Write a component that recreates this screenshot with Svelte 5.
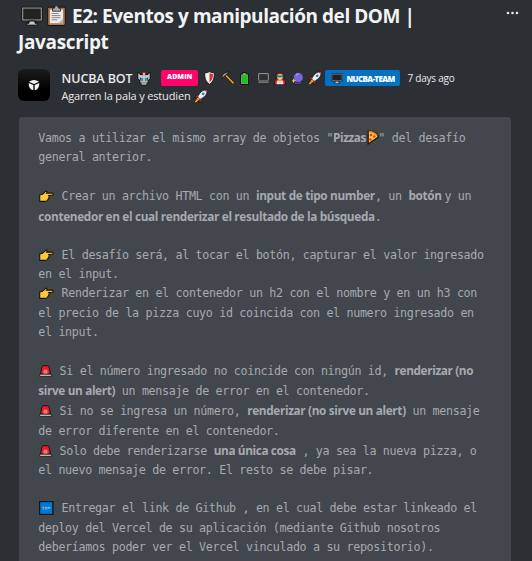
<script>
  const PITCH = 6.7;

  // Spreads the letters of a run so that it takes exactly the given width.
  function fit(node, width) {
    const natural = node.getBoundingClientRect().width;
    node.style.letterSpacing = (width - natural) / [...node.textContent].length + 'px';
  }

  const m = (t) => ({ t, w: t.length * PITCH });
  const b = (t, w) => ({ t, w, bold: true });
  const i = (icon, w) => ({ icon, w });

  const lines = [
    { top: 0, runs: [m('Vamos a utilizar el mismo array de objetos "'), b('Pizzas', 32.7), i('pizza', 12.5), m('" del desafío')] },
    { top: 1, runs: [m('general anterior.')] },
    { top: 21, runs: [i('point', 16.6), m(' Crear un archivo HTML con un '), b('input de tipo number', 119), m(', un '), b('botón ', 36), m('y un')] },
    { top: 3, runs: [b('contenedor en el cual renderizar el resultado de la búsqueda', 336.5), m('.')] },
    { top: 20, runs: [i('point', 16.6), m(' El desafío será, al tocar el botón, capturar el valor ingresado')] },
    { top: 1, runs: [m('en el input.')] },
    { top: 1, runs: [i('point', 16.6), m(' Renderizar en el contenedor un h2 con el nombre y en un h3 con')] },
    { top: 2, runs: [m('el precio de la pizza cuyo id coincida con el numero ingresado en')] },
    { top: 1, runs: [m('el input.')] },
    { top: 21, runs: [i('siren', 14.6), m(' Si el número ingresado no coincide con ningún id, '), b('renderizar (no', 78.5)] },
    { top: 2, runs: [b('sirve un alert)', 76.8), m(' un mensaje de error en el contenedor.')] },
    { top: 2, runs: [i('siren', 14.6), m(' Si no se ingresa un número, '), b('renderizar (no sirve un alert)', 158.6), m(' un mensaje')] },
    { top: 2, runs: [m('de error diferente en el contenedor.')] },
    { top: 2, runs: [i('siren', 14.6), m(' Solo debe renderizarse '), b('una única cosa', 82), m(' , ya sea la nueva pizza, o')] },
    { top: 1, runs: [m('el nuevo mensaje de error. El resto se debe pisar.')] },
    { top: 20, runs: [i('soon', 16.6), m(' Entregar el link de Github , en el cual debe estar linkeado el')] },
    { top: 2, runs: [m('deploy del Vercel de su aplicación (mediante Github nosotros')] },
    { top: 1, runs: [m('deberíamos poder ver el Vercel vinculado a su repositorio).')] }
  ];
</script>

{#snippet monitor(w, h)}
  <svg width={w} height={h} viewBox="0 0 22 20">
    <rect x=".5" y=".8" width="21" height="14.4" rx="1" fill="#090909" />
    <rect x="1.7" y="2" width="18.6" height="12" fill="#222" stroke="#a7a5a1" />
    <path d="M8 15h6v2.2h2.2v2H5.8v-2H8z" fill="#c9c9c9" stroke="#090909" />
  </svg>
{/snippet}

{#snippet rocket()}
  <svg width="14" height="14" viewBox="0 0 14 14">
    <path d="M4 5 1.2 7.4 1 9l3-.5M9 9.500l-2.500 3.800-1.600.2.600-3.200" fill="#dc252d" stroke="#151515" stroke-width=".8" />
    <path d="M13.200.7C8.800.5 5.700 3.300 3.600 8l2.300 2.400C10.500 8.400 13.500 5.400 13.200.7z" fill="#e9eef2" stroke="#171717" stroke-width=".8" />
    <path d="m10.200 1 2.700-.1.100 2.900z" fill="#df2935" />
    <circle cx="9.200" cy="4.800" r="1.400" fill="#2487bd" />
    <path d="m3.800 8.500 1.800 1.800-3.600 2.900L.8 13z" fill="#ffb720" />
    <path d="m3.500 9.800.8.800-2 1.500z" fill="#f05b28" />
  </svg>
{/snippet}

<div class="page">
  <header>
    <h1>
      <span class="row">
        <span class="screen">{@render monitor(22, 20)}</span>
        <svg class="clip" width="19" height="21" viewBox="0 0 19 21">
          <rect x=".7" y="2.200" width="17.600" height="18.300" rx="1.400" fill="#b3794b" stroke="#17120f" />
          <rect x="3" y="4.600" width="13" height="13.600" fill="#eceaea" />
          <path d="M11.500 18.200 16 13.800v4.400z" fill="#b3b0ae" />
          <path d="M5.500 3.200h2L8.300.8h2.400l.8 2.400h2v3h-8z" fill="#aaa" stroke="#222" stroke-width=".8" />
          <path d="M4.600 8.500h7M4.600 10.600h9M4.600 12.700h9M4.600 14.800h5.500" stroke="#8b8b8b" />
        </svg>
        <span use:fit={342.5}>E2: Eventos y manipulación del DOM |</span>
      </span>
      <span class="row"><span use:fit={90.5}>Javascript</span></span>
    </h1>
    <svg class="more" width="14" height="4" viewBox="0 0 14 4" fill="#e8e9ea">
      <circle cx="2" cy="2" r="1.300" /><circle cx="6.500" cy="2" r="1.300" /><circle cx="11" cy="2" r="1.300" />
    </svg>
  </header>

  <div class="author">
    <div class="avatar">
      <svg width="12" height="12" viewBox="0 0 12 12" fill="#f4f4f4">
        <path d="M1 2.800Q6-.6 11 2.800L6 5z" /><path d="M.7 3.900 5.300 6v5.200C2.300 10.400.5 8 .7 3.900z" /><path d="M11.300 3.900 6.700 6v5.200c3-.8 4.800-3.200 4.600-7.300z" />
      </svg>
    </div>
    <div class="who">
      <div class="row names">
        <span class="name"><span use:fit={71}>NUCBA BOT</span></span>
        <svg class="bot" width="14" height="15" viewBox="0 0 14 15">
          <path d="M.8.8 3 3.500h8L13.200.8v7.400l-1.800.8-.8 4-2 1.300H5.400l-2-1.300-.8-4-1.800-.8z" fill="#bfc7cc" stroke="#111" />
          <path d="M5.600 1.500h2.800v4H5.600z" fill="#e94c34" /><path d="M6.500 2h1v4h-1z" fill="#fff" />
          <path d="M2.800 6.500 6 7.500v2H3.500zM11.200 6.500 8 7.500v2h2.500z" fill="#172a38" />
          <circle cx="4.800" cy="8" r="1" fill="#20b8ed" /><circle cx="9.200" cy="8" r="1" fill="#20b8ed" />
          <path d="M4.500 11.300h5v1.600h-5z" fill="#e6e8e8" stroke="#444" stroke-width=".6" />
        </svg>
        <span class="badge admin"><span use:fit={25.5}>ADMIN</span></span>
        <svg class="shield" width="11" height="14" viewBox="0 0 11 14">
          <path d="M.7 1.800Q3.500 1.800 5.500.6q2 1.200 4.800 1.200c.2 5.700-1 9-4.800 11.500C1.700 10.800.5 7.500.7 1.800z" fill="#e8e8e8" stroke="#191919" />
          <path d="M5.500 2.200v9.200C3 9.500 2 7 2 3q2 0 3.500-.8z" fill="#f2f2f2" /><path d="M5.500 2.200v9.200C8 9.500 9 7 9 3q-2 0-3.500-.8z" fill="#dc2d32" />
        </svg>
        <svg class="pick" width="14" height="14" viewBox="0 0 14 14">
          <path d="m5 4.500 7.800 8" stroke="#1a1510" stroke-width="3" /><path d="m5 4.500 7.600 7.800" stroke="#e7a12c" stroke-width="1.700" />
          <path d="M.8 7.300C.8 3.800 3.500 1 8.500.9 6.800 2 5.800 3 4.700 3.900 3.100 5.200 2 6.200.8 7.300z" fill="#a9a9a4" stroke="#171717" stroke-width=".8" />
        </svg>
        <svg class="battery" width="9" height="13" viewBox="0 0 9 13">
          <path d="M2.700.5h3.600V2h2.200v10.500H.5V2h2.200z" fill="#8d9b8d" stroke="#111" /><path d="M1.500 3.200h6v8.300h-6z" fill="#16c60c" />
        </svg>
        <svg class="laptop" width="13" height="11" viewBox="0 0 13 11">
          <path d="M1.700.6h9.600v7H1.700z" fill="#303030" stroke="#a4a4a4" stroke-width=".9" /><path d="M1.300 8h10.400l.9 2.200H.4z" fill="#8c8c8c" stroke="#181818" stroke-width=".7" />
        </svg>
        <svg class="hero" width="14" height="13" viewBox="0 0 14 13">
          <path d="M1 12.500 2.400 7h9.200l1.400 5.500z" fill="#e32432" stroke="#191012" stroke-width=".8" />
          <path d="M3.200 1Q7-1 10.700 1.300L11 6H3z" fill="#7c321a" stroke="#171111" stroke-width=".6" />
          <circle cx="7" cy="4.900" r="3" fill="#ffbe6d" /><path d="M3.700 3.500h6.600v2l-2-.2L7 5l-1.400.5-1.900-.2z" fill="#137aa2" />
          <path d="m3.500 12.300.8-3.700h5.400l.8 3.700z" fill="#d9e7ed" /><path d="m5.300 9 1.700 2.500L8.700 9z" fill="#ffc83d" />
        </svg>
        <svg class="ball" width="12" height="13" viewBox="0 0 12 13">
          <path d="M2.500 9h7.300v3.400H2.500z" fill="#63479b" stroke="#191428" stroke-width=".7" /><circle cx="6.300" cy="5.500" r="5" fill="#7469d2" stroke="#29245b" stroke-width=".8" />
          <path d="M4 3.300q1.200-1.800 3-1.500" stroke="#aea5f5" stroke-width="1.200" fill="none" /><path d="m1.500 6.500.8 1.600 1.700.7-1.700.8-.8 1.600-.7-1.600-.8-.8.8-.7z" fill="#ffc42d" />
        </svg>
        <span class="rocket">{@render rocket()}</span>
        <span class="badge team">{@render monitor(12, 11)}<span use:fit={48}>NUCBA-TEAM</span></span>
        <span class="time"><span use:fit={47}>7 days ago</span></span>
      </div>
      <div class="row tagline"><span use:fit={129}>Agarren la pala y estudien</span>{@render rocket()}</div>
    </div>
  </div>

  <article>
    {#each lines as line}
      <div class="line" style="margin-top: {line.top}px">
        {#each line.runs as run}
          {#if run.icon}
            <span class="emoji" style="width: {run.w}px">
              {#if run.icon === 'point'}
                <svg width="15" height="12" viewBox="0 0 15 12">
                  <path d="M.7 5 3.500 4.300 6.500 1.400c1-.6 1.900.2 1.400 1.100l-.4.600h5.700c1.300 0 1.300 2.100 0 2.200l-3.300.2c.5.500.5 1.200 0 1.600.3.600.1 1.300-.5 1.600.1.700-.3 1.100-1 1.300-.2.900-.9 1.400-2 1.400H.7z" fill="#ffc83d" stroke="#17130c" stroke-width="1.100" />
                </svg>
              {:else if run.icon === 'siren'}
                <svg width="13" height="12" viewBox="0 0 13 12">
                  <path d="M1.500 9.300 2.800 2.200Q3.200.7 4.600.6h3.800q1.400.1 1.800 1.600l1.300 7.100z" fill="#e51b2b" stroke="#141414" />
                  <path d="M4.500 9V6.800L3.600 6l1.300-.2L5.200 4l1.300 1L7.800 4l.3 1.800 1.300.2-.9.800V9z" fill="#ff7563" />
                  <path d="M.6 9.200h11.800v2.200H.6z" fill="#c9ccd0" stroke="#141414" stroke-width=".8" />
                </svg>
              {:else if run.icon === 'soon'}
                <svg width="15" height="14" viewBox="0 0 15 14">
                  <rect x=".6" y=".6" width="13.300" height="12.800" fill="#0078d7" stroke="#111" stroke-width="1.200" />
                  <path d="M3.300 6.300h2M3.600 8h1.700M6 6.500h2M6.200 7.900h2M9 7.800V6l.9.900.9-.9v1.800" fill="none" stroke="#9dd2f5" stroke-width=".8" />
                </svg>
              {:else}
                <svg class="slice" width="12" height="15" viewBox="0 0 12 15">
                  <path d="M1.200.8Q8 .8 11 5.300v1.900L1.200 14z" fill="#ffc83d" stroke="#1b130a" stroke-width="1.200" /><path d="M1.800 1.500Q7 1.700 10.200 5.500" stroke="#da8023" stroke-width="1.300" fill="none" />
                  <circle cx="4" cy="5" r="1.300" fill="#df352e" /><circle cx="7.300" cy="6.500" r="1.200" fill="#df352e" /><circle cx="3.500" cy="9.500" r="1.300" fill="#df352e" />
                </svg>
              {/if}
            </span>
          {:else}
            <span class={run.bold ? 'bold' : 'mono'} use:fit={run.w}>{run.t}</span>
          {/if}
        {/each}
      </div>
    {/each}
  </article>
</div>

<style>
  :global(body) { margin: 0; background: #2c2f33; }
  .page { box-sizing: border-box; width: 532px; height: 561px; overflow: hidden; padding: 3px 21px 0 18px; background: #2c2f33; color: #e9eaec; font-family: 'Open Sans', 'Noto Sans', sans-serif; }
  svg { display: block; flex: none; }
  header { display: flex; justify-content: space-between; height: 66px; }
  h1 { margin: 0; font-size: 19px; line-height: 26px; font-weight: 700; color: #f1f3f4; }
  .row { display: flex; align-items: center; white-space: pre; }
  .screen { margin: 0 4px 0 3px; }
  .clip { margin: -2px 6px 0 0; }
  .more { margin: 8px -9px 0 0; }
  .author { display: flex; height: 48px; gap: 11.500px; }
  .avatar { display: flex; align-items: center; justify-content: center; width: 32px; height: 32px; border-radius: 6px; background: linear-gradient(#1c1c1d, #000 65%); }
  .names { height: 18px; }
  .name { font-size: 12.500px; font-weight: 600; width: 75.500px; }
  .bot { margin-right: 10px; }
  .badge { display: flex; align-items: center; box-sizing: border-box; height: 16px; border-radius: 2px; font-weight: 800; color: #fff; }
  .admin { width: 37px; padding-left: 6px; background: #ff0569; font-size: 7px; line-height: 14px; align-items: flex-start; }
  .team { width: 75px; padding-left: 6px; gap: 4px; background: #0472c4; font-size: 8px; }
  .shield { margin-left: 5.500px; }
  .pick { margin-left: 6px; }
  .battery { margin-left: 5px; }
  .laptop { margin-left: 8px; }
  .hero { margin-left: 3px; }
  .ball { margin-left: 5px; }
  .rocket { margin: 0 3px 0 4px; }
  .time { margin-left: 8px; font-size: 10px; font-weight: 500; }
  .tagline { height: 18px; gap: 3px; font-size: 11px; font-weight: 500; }
  .tagline span { margin-top: -1px; }
  article { box-sizing: border-box; width: 492px; height: 460px; margin-left: 1px; padding: 12px 0 0 19.300px; border-radius: 3px; background: #42464d; color: #a7aaae; }
  .line { display: flex; align-items: baseline; height: 18px; white-space: pre; line-height: 18px; font-size: 11.700px; }
  .mono { font-family: 'DejaVu Sans Mono', monospace; }
  .bold { font-size: 11.800px; line-height: 16px; font-weight: 700; color: #a7aaaf; }
  .emoji { display: flex; align-items: center; align-self: center; height: 18px; padding-left: 1px; box-sizing: border-box; }
  .slice { margin-top: -2px; }
</style>
